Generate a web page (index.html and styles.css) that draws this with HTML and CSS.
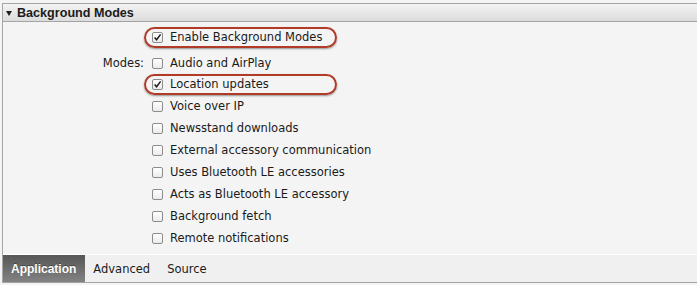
FILE: index.html
```html
<!DOCTYPE html>
<html>
<head>
<meta charset="utf-8">
<link rel="stylesheet" href="styles.css">
</head>
<body>
<div class="panel">
  <div class="header"><span class="tri"></span><span class="title">Background Modes</span></div>
  <div class="content">
    <div class="row first">
      <div class="label"></div>
      <div class="opt hl"><span class="cb on"><svg viewBox="0 0 11 11" width="11" height="11"><path d="M2.6 5.4 L4.6 7.8 L8.6 2.4" fill="none" stroke="#1e1e1e" stroke-width="1.5"/></svg></span><span>Enable Background Modes</span></div>
    </div>
    <div class="row second">
      <div class="label">Modes:</div>
      <div class="opt"><span class="cb"></span><span>Audio and AirPlay</span></div>
    </div>
    <div class="row">
      <div class="label"></div>
      <div class="opt hl"><span class="cb on"><svg viewBox="0 0 11 11" width="11" height="11"><path d="M2.6 5.4 L4.6 7.8 L8.6 2.4" fill="none" stroke="#1e1e1e" stroke-width="1.5"/></svg></span><span>Location updates</span></div>
    </div>
    <div class="row"><div class="label"></div><div class="opt"><span class="cb"></span><span>Voice over IP</span></div></div>
    <div class="row"><div class="label"></div><div class="opt"><span class="cb"></span><span>Newsstand downloads</span></div></div>
    <div class="row"><div class="label"></div><div class="opt"><span class="cb"></span><span>External accessory communication</span></div></div>
    <div class="row"><div class="label"></div><div class="opt"><span class="cb"></span><span>Uses Bluetooth LE accessories</span></div></div>
    <div class="row"><div class="label"></div><div class="opt"><span class="cb"></span><span>Acts as Bluetooth LE accessory</span></div></div>
    <div class="row"><div class="label"></div><div class="opt"><span class="cb"></span><span>Background fetch</span></div></div>
    <div class="row"><div class="label"></div><div class="opt"><span class="cb"></span><span>Remote notifications</span></div></div>
  </div>
  <div class="tabs">
    <div class="tab active">Application</div>
    <div class="tab">Advanced</div>
    <div class="tab">Source</div>
  </div>
</div>
</body>
</html>
```
FILE: styles.css
```css
html, body {
  margin: 0;
  padding: 0;
  background: #f4f4f4;
}
body {
  width: 697px;
  height: 285px;
  overflow: hidden;
  padding: 3px 0 0 2px;
  box-sizing: border-box;
  font-family: "DejaVu Sans", "Liberation Sans", sans-serif;
  font-size: 11.5px;
  color: #1a1a1a;
}
.panel {
  height: 280px;
  box-sizing: border-box;
  border-top: 1px solid #a6a6a6;
  border-left: 1px solid #a6a6a6;
  border-bottom: 1px solid #a3a3a3;
  display: flex;
  flex-direction: column;
}
.header {
  height: 17px;
  flex-shrink: 0;
  border-bottom: 1px solid #a3a3a3;
  background: linear-gradient(#f3f3f3, #dcdcdc);
  display: flex;
  align-items: center;
  padding-left: 3px;
  gap: 5px;
}
.tri {
  width: 0;
  height: 0;
  margin-top: 1px;
  border-left: 3.5px solid transparent;
  border-right: 3.5px solid transparent;
  border-top: 5px solid #1e1e1e;
}
.title {
  font-family: "Liberation Sans", Arial, sans-serif;
  font-weight: bold;
  font-size: 12.6px;
  color: #1b1b1b;
}
.content {
  flex: 1;
  padding-top: 4px;
  display: flex;
  flex-direction: column;
}
.row {
  display: flex;
  height: 22px;
  flex-shrink: 0;
  align-items: center;
}
.row.first {
  margin-bottom: 4px;
}
.row.second {
  margin-bottom: -1px;
}
.label {
  width: 149px;
  text-align: right;
  padding-right: 8px;
  box-sizing: border-box;
  flex-shrink: 0;
}
.opt {
  display: flex;
  align-items: center;
  gap: 7px;
  white-space: nowrap;
}
.opt.hl {
  box-sizing: border-box;
  margin-left: -8px;
  padding-left: 6px;
  width: 193px;
  height: 21px;
  border: 2px solid #b13b27;
  border-radius: 11px;
  box-shadow: 0 1px 2px rgba(0, 0, 0, 0.4);
}
.cb {
  width: 9px;
  height: 9px;
  border: 1px solid #8c8c8c;
  border-radius: 2px;
  background: linear-gradient(#ffffff, #ebebeb);
  display: inline-flex;
  align-items: center;
  justify-content: center;
  flex-shrink: 0;
  overflow: visible;
}
.cb svg {
  display: block;
  flex-shrink: 0;
}
.tabs {
  height: 27px;
  flex-shrink: 0;
  border-top: 1px solid #ffffff;
  background: #f0f0f0;
  display: flex;
  align-items: stretch;
}
.tab {
  padding: 0 8px 0 8px;
  display: flex;
  align-items: center;
  font-size: 11.5px;
  color: #1a1a1a;
}
.tab + .tab {
  padding: 0 9px 0 8px;
}
.tab.active {
  background: linear-gradient(#565656, #838383);
  color: #fff;
  font-family: "Liberation Sans", Arial, sans-serif;
  font-weight: bold;
  font-size: 12px;
  padding: 0 9px 0 8px;
  text-shadow: 0 -1px 0 rgba(0, 0, 0, 0.35);
}
```
